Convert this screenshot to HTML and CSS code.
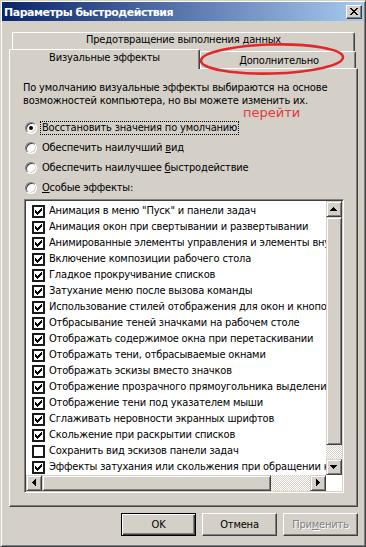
FILE: index.html
```html
<!DOCTYPE html>
<html lang="ru">
<head>
<meta charset="utf-8">
<title>Параметры быстродействия</title>
<link rel="stylesheet" href="styles.css">
</head>
<body>
<div class="window">
  <div class="titlebar">
    <span class="title">Параметры быстродействия</span>
    <span class="close"><svg width="8" height="7" viewBox="0 0 8 7" shape-rendering="crispEdges"><path d="M0 0h2v1H0zM6 0h2v1H6zM1 1h2v1H1zM5 1h2v1H5zM2 2h4v1H2zM3 3h2v1H3zM2 4h4v1H2zM1 5h2v1H1zM5 5h2v1H5zM0 6h2v1H0zM6 6h2v1H6z" fill="#000"/></svg></span>
  </div>
  <div class="client">
    <div class="tabs">
      <div class="tabrow back"><div class="tab tab-dep">Предотвращение выполнения данных</div></div>
      <div class="tabrow front">
        <div class="tab tab-vis selected">Визуальные эффекты</div>
        <div class="tab tab-adv">Дополнительно</div>
      </div>
    </div>
    <div class="panel">
      <p class="intro">По умолчанию визуальные эффекты выбираются на основе<br>возможностей компьютера, но вы можете изменить их.</p>
      <div class="radios">
        <div class="radio"><span class="rb checked"></span><span class="rlabel focus">Восстановить значения по умолчанию</span></div>
        <div class="radio"><span class="rb"></span><span class="rlabel">Обеспечить наилучший <u>в</u>ид</span></div>
        <div class="radio"><span class="rb"></span><span class="rlabel">Обеспечить наилучшее <u>б</u>ыстродействие</span></div>
        <div class="radio"><span class="rb"></span><span class="rlabel"><u>О</u>собые эффекты:</span></div>
      </div>
      <div class="listbox">
        <div class="items">
          <div class="item"><span class="cb on"></span>Анимация в меню "Пуск" и панели задач</div>
          <div class="item"><span class="cb on"></span>Анимация окон при свертывании и развертывании</div>
          <div class="item"><span class="cb on"></span>Анимированные элементы управления и элементы внутри окна</div>
          <div class="item"><span class="cb on"></span>Включение композиции рабочего стола</div>
          <div class="item"><span class="cb on"></span>Гладкое прокручивание списков</div>
          <div class="item"><span class="cb on"></span>Затухание меню после вызова команды</div>
          <div class="item"><span class="cb on"></span>Использование стилей отображения для окон и кнопок</div>
          <div class="item"><span class="cb on"></span>Отбрасывание теней значками на рабочем столе</div>
          <div class="item"><span class="cb on"></span>Отображать содержимое окна при перетаскивании</div>
          <div class="item"><span class="cb on"></span>Отображать тени, отбрасываемые окнами</div>
          <div class="item"><span class="cb on"></span>Отображать эскизы вместо значков</div>
          <div class="item"><span class="cb on"></span>Отображение прозрачного прямоугольника выделения</div>
          <div class="item"><span class="cb on"></span>Отображение тени под указателем мыши</div>
          <div class="item"><span class="cb on"></span>Сглаживать неровности экранных шрифтов</div>
          <div class="item"><span class="cb on"></span>Скольжение при раскрытии списков</div>
          <div class="item"><span class="cb"></span>Сохранить вид эскизов панели задач</div>
          <div class="item"><span class="cb on"></span>Эффекты затухания или скольжения при обращении к меню</div>
        </div>
        <div class="vscroll">
          <span class="sbtn"><svg width="14" height="14" viewBox="0 0 14 14" shape-rendering="crispEdges"><path d="M6 5h1v1h1v1h1v1h1v1H3V8h1V7h1V6h1z" fill="#000"/></svg></span>
          <span class="thumb thumb-v"></span>
          <span class="track"></span>
          <span class="sbtn"><svg width="14" height="14" viewBox="0 0 14 14" shape-rendering="crispEdges"><path d="M3 5h7v1H9v1H8v1H7v1H6V8H5V7H4V6H3z" fill="#000"/></svg></span>
        </div>
        <div class="hscroll">
          <span class="sbtn"><svg width="14" height="14" viewBox="0 0 14 14" shape-rendering="crispEdges"><path d="M5 6h1V5h1V4h1V3h1v7H8V9H7V8H6V7H5z" fill="#000"/></svg></span>
          <span class="thumb thumb-h"></span>
          <span class="track"></span>
          <span class="sbtn"><svg width="14" height="14" viewBox="0 0 14 14" shape-rendering="crispEdges"><path d="M5 3h1v1h1v1h1v1h1v1H8v1H7v1H6v1H5z" fill="#000"/></svg></span>
        </div>
        <div class="corner"></div>
      </div>
    </div>
    <div class="buttons">
      <span class="btn default">OK</span>
      <span class="btn">Отмена</span>
      <span class="btn disabled">При<u>м</u>енить</span>
    </div>
  </div>
  <svg class="ellipse" width="150" height="36" viewBox="0 0 150 36"><ellipse cx="74" cy="18" rx="71" ry="14.5" fill="none" stroke="#e3262a" stroke-width="2.6" transform="rotate(-1.5 74 18)"/></svg>
  <span class="annot">перейти</span>
</div>
</body>
</html>
```
FILE: styles.css
```css
* { box-sizing: border-box; margin: 0; padding: 0; }
html, body { width: 366px; height: 547px; overflow: hidden; background: #d4d0c8; }
body {
  font-family: "DejaVu Sans Condensed", "DejaVu Sans", sans-serif;
  font-stretch: condensed;
  font-size: 11px;
  letter-spacing: -0.18px;
  color: #000;
}
u { text-decoration: underline; text-underline-offset: 1px; }

.window {
  position: relative;
  width: 366px;
  height: 547px;
  background: #d4d0c8;
  border-style: solid;
  border-width: 1px;
  border-color: #d4d0c8 #404040 #404040 #d4d0c8;
  box-shadow: inset 1px 1px #fff, inset -1px -1px #808080;
  padding: 1px;
}

.titlebar {
  height: 19px;
  display: flex;
  align-items: center;
  justify-content: space-between;
  padding: 0 2px 0 2px;
  background: linear-gradient(90deg, #0a246a, #a6caf0);
}
.title {
  color: #fff;
  font-family: "DejaVu Sans", sans-serif;
  font-stretch: normal;
  font-weight: bold;
  font-size: 11px;
  letter-spacing: -0.5px;
  line-height: 19px;
  padding-top: 1px;
}
.close {
  width: 16px;
  height: 14px;
  display: flex;
  align-items: center;
  justify-content: center;
  background: #d4d0c8;
  border-style: solid;
  border-width: 1px;
  border-color: #fff #404040 #404040 #fff;
  box-shadow: inset -1px -1px #808080;
}

.client { padding: 11px 0 0 7px; }

.tabs { width: 349px; height: 36px; }
.tabrow { display: flex; }
.tabrow.back { padding-left: 3px; height: 19px; }
.tabrow.front { margin-top: -2px; height: 19px; align-items: flex-end; }
.tab {
  background: #d4d0c8;
  border-style: solid;
  border-width: 1px 1px 0 1px;
  border-color: #fff #404040 #fff #fff;
  box-shadow: inset -1px 0 #808080;
  border-radius: 2px 2px 0 0;
  text-align: center;
}
.tab-dep { width: 343px; height: 19px; line-height: 14px; }
.tab-vis { width: 191px; height: 20px; margin-bottom: -1px; position: relative; z-index: 1; line-height: 16px; }
.tab-adv { width: 156px; height: 17px; line-height: 17px; padding-left: 2px; }

.panel {
  width: 349px;
  height: 439px;
  border-style: solid;
  border-width: 1px;
  border-color: #fff #404040 #404040 #fff;
  box-shadow: inset -1px -1px #808080;
  padding: 12px 0 0 13px;
}
.intro { line-height: 13px; white-space: nowrap; }

.radios { margin-top: 11px; }
.radio { height: 20px; display: flex; align-items: center; }
.rb {
  position: relative;
  width: 12px;
  height: 12px;
  margin: 0 3px 0 2px;
  border-radius: 50%;
  background: #fff;
  border-style: solid;
  border-width: 1px;
  border-color: #808080 #fff #fff #808080;
  box-shadow: inset 1px 1px #404040, inset -1px -1px #d4d0c8;
}
.rb.checked::after {
  content: "";
  position: absolute;
  left: 3px;
  top: 3px;
  width: 4px;
  height: 4px;
  border-radius: 50%;
  background: #000;
}
.rlabel { display: inline-block; padding: 0 2px; line-height: 14px; white-space: nowrap; }
.rlabel.focus { outline: 1px dotted #000; outline-offset: -1px; }

.listbox {
  margin: 1px 0 0 1px;
  width: 320px;
  height: 294px;
  background: #fff;
  border-style: solid;
  border-width: 1px;
  border-color: #808080 #fff #fff #808080;
  box-shadow: inset 1px 1px #404040, inset -1px -1px #d4d0c8;
  padding: 1px;
  display: grid;
  grid-template-columns: 300px 16px;
  grid-template-rows: 274px 16px;
}
.items { overflow: hidden; padding-top: 2px; }
.item { height: 16px; display: flex; align-items: flex-start; line-height: 16px; white-space: nowrap; }
.cb {
  flex: none;
  width: 13px;
  height: 13px;
  margin: 2px 4px 0 6px;
  background: #fff;
  border: 2px solid #1a1a1a;
}
.cb.on {
  background: #fff url("data:image/svg+xml;utf8,<svg xmlns='http://www.w3.org/2000/svg' width='7' height='7' shape-rendering='crispEdges'><path d='M6 0h1v1H6zM5 1h2v1H5zM0 2h1v1H0zM4 2h3v1H4zM0 3h2v1H0zM3 3h3v1H3zM0 4h5v1H0zM1 5h3v1H1zM2 6h1v1H2z' fill='black'/></svg>") no-repeat 1px 1px;
}

.vscroll { display: flex; flex-direction: column; }
.hscroll { display: flex; }
.sbtn, .thumb {
  flex: none;
  width: 16px;
  height: 16px;
  background: #d4d0c8;
  border-style: solid;
  border-width: 1px;
  border-color: #d4d0c8 #404040 #404040 #d4d0c8;
  box-shadow: inset 1px 1px #fff, inset -1px -1px #808080;
  display: flex;
  align-items: center;
  justify-content: center;
}
.thumb-v { height: 228px; }
.thumb-h { width: 229px; }
.track {
  flex: 1;
  background: repeating-conic-gradient(#d4d0c8 0 25%, #fff 0 50%) 0 0 / 2px 2px;
}
.corner { background: #fff; }

.buttons { margin-top: 6px; width: 349px; display: flex; justify-content: flex-end; gap: 6px; }
.btn {
  width: 75px;
  height: 23px;
  display: flex;
  align-items: center;
  justify-content: center;
  background: #d4d0c8;
  border-style: solid;
  border-width: 1px;
  border-color: #fff #404040 #404040 #fff;
  box-shadow: inset -1px -1px #808080;
}
.btn.default {
  border-color: #000;
  box-shadow: inset 1px 1px #fff, inset -1px -1px #404040, inset -2px -2px #808080;
}
.btn.disabled { color: #808080; text-shadow: 1px 1px #fff; }

.ellipse { position: absolute; left: 197px; top: 40px; }
.annot {
  position: absolute;
  left: 242px;
  top: 104px;
  font-family: "DejaVu Sans", sans-serif;
  font-stretch: normal;
  font-size: 13px;
  letter-spacing: 0;
  line-height: 15px;
  color: #e3393c;
}
```
